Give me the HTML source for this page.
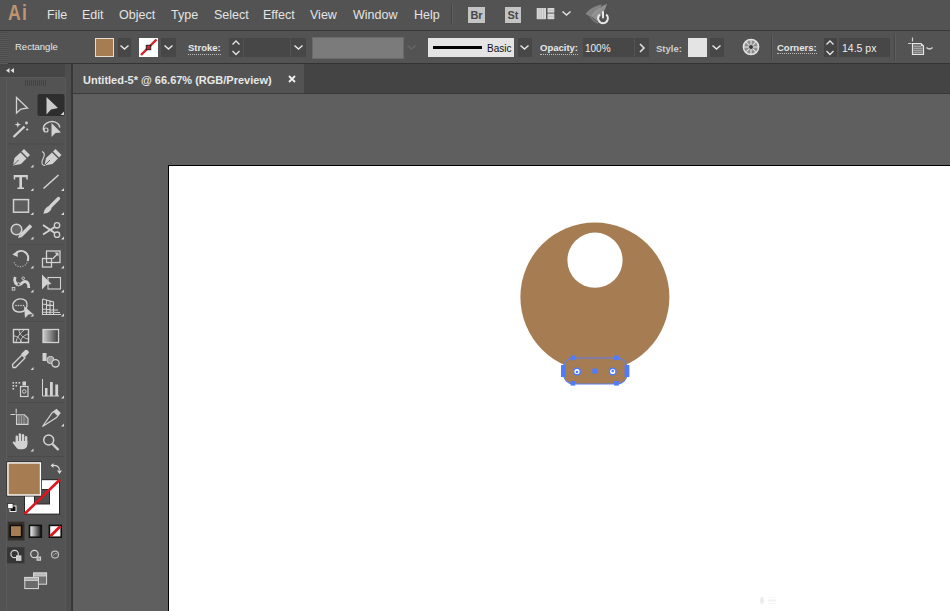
<!DOCTYPE html>
<html><head><meta charset="utf-8">
<style>
*{margin:0;padding:0;box-sizing:border-box}
html,body{width:950px;height:611px;overflow:hidden;background:#535353;font-family:"Liberation Sans",sans-serif;color:#e6e6e6;position:relative}
.a{position:absolute}
svg{position:absolute;overflow:visible}
#menubar{left:0;top:0;width:950px;height:30px;background:#535353}
.mi{position:absolute;top:8px;font-size:12.5px;line-height:14px;color:#e4e4e4;white-space:nowrap}
#ctrl{left:0;top:30px;width:950px;height:34px;background:#535353;border-top:1px solid #393939;border-bottom:1px solid #333}
.lbl{position:absolute;font-size:9.5px;line-height:11px;color:#e8e8e8;white-space:nowrap;font-weight:bold}
.ul{border-bottom:1px dotted #bdbdbd;padding-bottom:0.5px}
.dk{position:absolute;background:#474747}
#tools{left:0;top:64px;width:72px;height:547px;background:#535353}
#tabrow{left:73px;top:64px;width:877px;height:30px;background:#444444;border-bottom:1px solid #393939}
#tab{left:73px;top:64px;width:231px;height:29px;background:#535353}
#canvas{left:73px;top:94px;width:877px;height:517px;background:#5f5f5f}
#artboard{left:168px;top:165px;width:782px;height:446px;background:#ffffff;border-top:1px solid #000;border-left:1px solid #000}
</style></head><body>
<div id="menubar" class="a">
  <div class="a" style="left:8px;top:1px;font-size:22px;line-height:24px;font-weight:bold;color:#bf9470;letter-spacing:1.5px;transform:scaleX(0.8);transform-origin:0 0">Ai</div>
  <div class="mi" style="left:47px">File</div>
  <div class="mi" style="left:82px">Edit</div>
  <div class="mi" style="left:119px">Object</div>
  <div class="mi" style="left:171px">Type</div>
  <div class="mi" style="left:214px">Select</div>
  <div class="mi" style="left:263px">Effect</div>
  <div class="mi" style="left:310px">View</div>
  <div class="mi" style="left:353px">Window</div>
  <div class="mi" style="left:414px">Help</div>
  <div class="a" style="left:451px;top:4px;width:1px;height:20px;background:#454545"></div>
  <div class="a" style="left:452px;top:4px;width:1px;height:20px;background:#5f5f5f"></div>
  <div class="a" style="left:468px;top:7px;width:17px;height:16px;background:#c4c4c4;color:#474747;font-size:11px;font-weight:bold;line-height:16px;text-align:center">Br</div>
  <div class="a" style="left:505px;top:7px;width:16px;height:16px;background:#c4c4c4;color:#474747;font-size:11px;font-weight:bold;line-height:16px;text-align:center">St</div>
  <svg style="left:536px;top:8px" width="19" height="12">
    <rect x="0.7" y="0" width="9.3" height="11.2" fill="#d6d6d6"/>
    <path d="M3 0 V11.2 M5.3 0 V11.2 M7.6 0 V11.2" stroke="#b4b4b4" stroke-width="0.6"/>
    <rect x="11.5" y="0" width="6.8" height="4.6" fill="#d6d6d6"/><rect x="11.5" y="5.6" width="6.8" height="5.6" fill="#d6d6d6"/>
    <path d="M11.5 2.3 H18.3 M11.5 8.4 H18.3" stroke="#b4b4b4" stroke-width="0.6"/>
  </svg>
  <svg style="left:562px;top:11px" width="9" height="5"><path d="M0.5 0.5 L4.5 4 L8.5 0.5" stroke="#e0e0e0" stroke-width="1.6" fill="none"/></svg>
  <svg style="left:580px;top:0px" width="32" height="30">
    <path d="M5.5 14 C9 9 15 5.5 22 4.5 C20 9 16 13.5 11 17 Z" fill="#8c8c8c" opacity="0.85"/>
    <path d="M11 16 C15 10.5 21 6.5 27 3.8 C25.5 9.5 22 15 17 21 Z" fill="#9a9a9a" opacity="0.85"/>
    <path d="M10 16 C12 19 15 22 18 23" stroke="#7a7a7a" stroke-width="2" fill="none" opacity="0.8"/>
    <path d="M19.8 14.6 A4.9 4.9 0 1 0 26.2 14.6" stroke="#e8e8e8" stroke-width="2" fill="none"/>
    <line x1="23" y1="11.3" x2="23" y2="18.2" stroke="#e8e8e8" stroke-width="2"/>
  </svg>
</div>
<div id="ctrl" class="a">
  <div class="a" style="left:0;top:1px;width:8px;height:32px;background:repeating-linear-gradient(#4a4a4a 0 1px,#5a5a5a 1px 2px)"></div>
  <div class="lbl" style="left:15px;top:10px;font-weight:normal;font-size:9.5px">Rectangle</div>
  <!-- fill -->
  <div class="a" style="left:95px;top:7px;width:19px;height:19px;background:#a67c52;border:1px solid #e8dccf"></div>
  <div class="dk" style="left:118px;top:7px;width:13px;height:19px"></div>
  <svg style="left:120px;top:14px" width="9" height="5"><path d="M0.5 0.5 L4.5 4 L8.5 0.5" stroke="#e6e6e6" stroke-width="1.5" fill="none"/></svg>
  <!-- stroke -->
  <div class="a" style="left:139px;top:7px;width:19px;height:19px;background:#fff;overflow:hidden">
    <svg style="left:0;top:0" width="19" height="19"><line x1="2" y1="17" x2="17.5" y2="1.5" stroke="#d8202a" stroke-width="2.4"/><rect x="7.3" y="7.3" width="4.4" height="4.4" fill="#d8202a" stroke="#222" stroke-width="1"/></svg>
  </div>
  <div class="dk" style="left:161px;top:7px;width:15px;height:19px"></div>
  <svg style="left:164px;top:14px" width="9" height="5"><path d="M0.5 0.5 L4.5 4 L8.5 0.5" stroke="#e6e6e6" stroke-width="1.5" fill="none"/></svg>
  <div class="lbl ul" style="left:188px;top:11px">Stroke:</div>
  <div class="dk" style="left:229px;top:7px;width:14px;height:19px"></div>
  <svg style="left:231px;top:9px" width="10" height="16"><path d="M1.5 4.5 L5 1 L8.5 4.5 M1.5 11 L5 14.5 L8.5 11" stroke="#e0e0e0" stroke-width="1.4" fill="none"/></svg>
  <div class="dk" style="left:244px;top:7px;width:46px;height:19px"></div>
  <div class="dk" style="left:291px;top:7px;width:15px;height:19px"></div>
  <svg style="left:294px;top:14px" width="9" height="5"><path d="M0.5 0.5 L4.5 4 L8.5 0.5" stroke="#e6e6e6" stroke-width="1.5" fill="none"/></svg>
  <!-- variable width -->
  <div class="a" style="left:312px;top:6px;width:92px;height:22px;background:#7b7b7b;border:1px solid #6a6a6a"></div>
  <svg style="left:407px;top:14px" width="9" height="5"><path d="M0.5 0.5 L4.5 4 L8.5 0.5" stroke="#686868" stroke-width="1.3" fill="none"/></svg>
  <!-- basic -->
  <div class="a" style="left:428px;top:7px;width:86px;height:19px;background:#e4e4e4"></div>
  <div class="a" style="left:433px;top:15px;width:49px;height:3px;background:#000"></div>
  <div class="a" style="left:487px;top:12px;font-size:10px;line-height:11px;color:#111">Basic</div>
  <div class="dk" style="left:518px;top:7px;width:14px;height:19px"></div>
  <svg style="left:520px;top:14px" width="9" height="5"><path d="M0.5 0.5 L4.5 4 L8.5 0.5" stroke="#e6e6e6" stroke-width="1.5" fill="none"/></svg>
  <!-- opacity -->
  <div class="lbl ul" style="left:540px;top:11px">Opacity:</div>
  <div class="dk" style="left:583px;top:7px;width:51px;height:19px"></div>
  <div class="a" style="left:585px;top:12px;font-size:10px;line-height:11px;color:#eee">100%</div>
  <div class="dk" style="left:635px;top:7px;width:14px;height:19px"></div>
  <svg style="left:639px;top:12px" width="6" height="10"><path d="M1 1 L5 5 L1 9" stroke="#e6e6e6" stroke-width="1.5" fill="none"/></svg>
  <!-- style -->
  <div class="lbl" style="left:656px;top:12px;color:#cfcfcf">Style:</div>
  <div class="a" style="left:688px;top:7px;width:19px;height:19px;background:#e4e4e4"></div>
  <div class="dk" style="left:710px;top:7px;width:14px;height:19px"></div>
  <svg style="left:712px;top:14px" width="9" height="5"><path d="M0.5 0.5 L4.5 4 L8.5 0.5" stroke="#e6e6e6" stroke-width="1.5" fill="none"/></svg>
  <!-- globe -->
  <svg style="left:742px;top:7px" width="18" height="18">
    <circle cx="9" cy="9" r="7.6" fill="#8e8e8e" stroke="#e4e4e4" stroke-width="1.5"/>
    <g stroke="#dcdcdc" stroke-width="1.2"><line x1="9" y1="1.5" x2="9" y2="16.5"/><line x1="1.5" y1="9" x2="16.5" y2="9"/><line x1="3.7" y1="3.7" x2="14.3" y2="14.3"/><line x1="14.3" y1="3.7" x2="3.7" y2="14.3"/></g>
    <circle cx="9" cy="9" r="2" fill="#3a3a3a"/>
  </svg>
  <div class="a" style="left:771px;top:3px;width:1px;height:27px;background:#464646"></div>
  <div class="a" style="left:772px;top:3px;width:1px;height:27px;background:#5e5e5e"></div>
  <!-- corners -->
  <div class="lbl ul" style="left:777px;top:10.5px">Corners:</div>
  <div class="dk" style="left:824px;top:7px;width:13px;height:19px;background:#444"></div>
  <svg style="left:825px;top:9px" width="10" height="16"><path d="M1.5 4.5 L5 1 L8.5 4.5 M1.5 11 L5 14.5 L8.5 11" stroke="#e0e0e0" stroke-width="1.4" fill="none"/></svg>
  <div class="dk" style="left:839px;top:7px;width:51px;height:19px"></div>
  <div class="a" style="left:842px;top:11px;font-size:10.5px;line-height:12px;color:#eee">14.5 px</div>
  <div class="a" style="left:894px;top:3px;width:1px;height:27px;background:#464646"></div>
  <div class="a" style="left:895px;top:3px;width:1px;height:27px;background:#5e5e5e"></div>
  <!-- doc icon -->
  <svg style="left:900px;top:0px" width="40" height="30">
    <path d="M12.5 6.5 V10.5 M8 12.5 H11.5" stroke="#d0d0d0" stroke-width="1.2" fill="none"/>
    <path d="M12.5 12.5 H21 L23.5 15 V23.5 H12.5 Z" fill="#7a7a7a" stroke="#e6e6e6" stroke-width="1.2"/>
    <path d="M14 15.5 H21 M14 17.5 H22 M14 19.5 H22 M14 21.5 H22" stroke="#b0b0b0" stroke-width="0.7"/>
    <path d="M21 12.5 L21 15 L23.5 15" fill="#dddddd"/>
    <path d="M26.5 16.5 Q29.5 19.5 32.5 16.5" stroke="#d6d6d6" stroke-width="1.4" fill="none"/>
  </svg>
</div>
<div id="tools" class="a"></div>
<svg style="left:0;top:0" width="73" height="611" viewBox="0 0 73 611">
<defs>
<linearGradient id="gt" x1="0" x2="1" y1="0" y2="0"><stop offset="0" stop-color="#3a3a3a"/><stop offset="1" stop-color="#cfcfcf"/></linearGradient>
<linearGradient id="gm" x1="0" x2="1" y1="0" y2="0"><stop offset="0" stop-color="#ffffff"/><stop offset="1" stop-color="#111111"/></linearGradient>
</defs>
<!-- header -->
<rect x="0" y="64" width="72" height="13" fill="#464646"/>
<rect x="0" y="77" width="72" height="1" fill="#5a5a5a"/>
<path d="M9.5 68 L6 70.5 L9.5 73 Z M14 68 L10.5 70.5 L14 73 Z" fill="#e0e0e0"/>
<!-- panel borders -->
<rect x="6" y="78" width="1" height="533" fill="#5a5a5a"/>
<rect x="65" y="64" width="7" height="547" fill="#4e4e4e"/>
<rect x="65" y="78" width="1" height="533" fill="#585858"/>
<rect x="71" y="64" width="2" height="547" fill="#383838"/>
<!-- gripper -->
<g fill="#434343"><rect x="25" y="80" width="1" height="6"/><rect x="27" y="80" width="1" height="6"/><rect x="29" y="80" width="1" height="6"/><rect x="31" y="80" width="1" height="6"/><rect x="33" y="80" width="1" height="6"/><rect x="35" y="80" width="1" height="6"/><rect x="37" y="80" width="1" height="6"/><rect x="39" y="80" width="1" height="6"/><rect x="41" y="80" width="1" height="6"/><rect x="43" y="80" width="1" height="6"/><rect x="45" y="80" width="1" height="6"/></g>
<g fill="#d2d2d2" stroke="#d2d2d2">
<!-- row1 -->
<rect x="37.5" y="94" width="27" height="22" rx="2" fill="#2e2e2e" stroke="none"/>
<path d="M16.5 97.5 L27.5 108 L21 109 L16.5 113 Z" fill="none" stroke-width="1.3"/>
<path d="M46.5 97 L58 108 L51 109.5 L46.5 114.5 Z" fill="#cacaca" stroke="none"/>
<path d="M64 111.5 V115 H60.5 Z" stroke="none"/>
<!-- row2 -->
<line x1="13.5" y1="137" x2="24.5" y2="126.5" stroke-width="2.4"/>
<path d="M17.8 121.5 L18.6 123.8 L21 124.6 L18.6 125.4 L17.8 127.8 L17 125.4 L14.6 124.6 L17 123.8 Z" stroke="none"/>
<circle cx="26.5" cy="123" r="1.4" stroke="none"/><circle cx="27.2" cy="129.5" r="1.1" stroke="none"/>
<path d="M44 131 C41 124 51 119 57 123 C59 124.5 60 126 59.5 127.5" fill="none" stroke-width="1.4"/>
<circle cx="46" cy="130" r="2" fill="none" stroke-width="1.2"/>
<path d="M51.5 123 L61 132.5 L55.5 133 L51.5 137 Z" stroke="none"/>
<!-- row3 pen -->
<path d="M13 165.5 L14.5 158 L20.5 152.5 L26.5 158.5 L21 164 Z" stroke="none"/>
<path d="M21.5 151.5 L24 149 L30 155 L27.5 157.5 Z" stroke="none"/>
<line x1="13.5" y1="165" x2="18.5" y2="160" stroke="#535353" stroke-width="0.9"/>
<path d="M44.5 165.5 L46 158 L52 152.5 L58 158.5 L52.5 164 Z" stroke="none"/>
<path d="M53 151.5 L55.5 149 L61.5 155 L59 157.5 Z" stroke="none"/>
<line x1="45" y1="165" x2="50" y2="160" stroke="#535353" stroke-width="0.9"/>
<path d="M42 151.5 C46 153 44 157 42.5 160 C41 163 42.5 166 45 165.5" fill="none" stroke-width="1.1"/>
<!-- row4 -->
<path d="M13.7 175 H27.8 V179.5 H26.3 V177.2 H22 V187.4 H24 V189 H17.4 V187.4 H19.4 V177.2 H15.2 V179.5 H13.7 Z" stroke="none"/>
<line x1="43.5" y1="188.5" x2="58.5" y2="175" stroke-width="1.6"/>
<!-- row5 -->
<rect x="13.5" y="199.6" width="15" height="12.6" fill="#5e5e5e" stroke-width="1.5"/>
<line x1="58.5" y1="198.5" x2="50.5" y2="206.5" stroke-width="3.2" stroke-linecap="round"/>
<path d="M43.5 213.8 C44 210 46 206.5 49.5 206 L51.5 208 C51 211.5 47.5 213.5 43.5 213.8 Z" stroke="none"/>
<!-- row6 -->
<circle cx="16.5" cy="229.5" r="5.3" fill="#666" stroke-width="1.5"/>
<line x1="31" y1="225.5" x2="21" y2="235.5" stroke-width="3.6"/>
<path d="M19.5 234 L22.5 237 L18 238 Z" stroke="none"/>
<circle cx="57" cy="225.3" r="2.7" fill="none" stroke-width="1.3"/>
<circle cx="57" cy="234.7" r="2.7" fill="none" stroke-width="1.3"/>
<path d="M43 225 L54.8 233 M43 234.5 L54.8 227" fill="none" stroke-width="2"/>
<!-- row7 -->
<path d="M16.5 252.8 A7 7 0 0 1 27.5 261" fill="none" stroke-width="2.1"/>
<path d="M27 262.5 A7 7 0 0 1 14 262" fill="none" stroke-width="1.2" stroke-dasharray="1.2 1.3" opacity="0.75"/>
<path d="M12.3 254.5 L17.5 251 L17.8 257 Z" stroke="none"/>
<rect x="46.5" y="251" width="13.5" height="11.5" fill="none" stroke-width="1.3"/>
<rect x="42.5" y="258.5" width="9" height="8.5" fill="none" stroke-width="1.3"/>
<line x1="52.5" y1="259" x2="57.5" y2="254" stroke-width="1.3"/>
<path d="M58.5 252.5 L58.5 256.5 L54.5 252.5 Z" stroke="none"/>
<!-- row8 -->
<path d="M15.2 277 C13.8 280.5 15.5 284.5 18.5 284.8 C21.5 285 22 281.5 24.8 281.5 C27.3 281.5 28.8 284 28.8 288" fill="none" stroke-width="2.8"/>
<circle cx="18.6" cy="284.2" r="1.5" fill="#535353" stroke-width="0.9"/>
<circle cx="23.2" cy="278.3" r="1.3" fill="#535353" stroke-width="0.9"/>
<rect x="12.2" y="287.5" width="2.6" height="2.6" fill="none" stroke-width="0.9"/>
<path d="M42 274.5 L51.5 284 L46.5 284.8 L42 289.5 Z" stroke="none"/>
<rect x="48" y="277.5" width="12.5" height="11.5" fill="none" stroke-width="1.1"/>
<!-- row9 -->
<path d="M14 302 C17 298 23 298 26 301 C28 304 27 309 24 311 C20 313 14 312 13 308 C12.5 305 13 303 14 302 Z" fill="none" stroke-width="1.4"/>
<g stroke="none"><circle cx="16" cy="305.5" r="0.8"/><circle cx="18.5" cy="305.5" r="0.8"/><circle cx="21" cy="305.5" r="0.8"/><circle cx="23.5" cy="305.5" r="0.8"/></g>
<path d="M24 306 L33 314 L28.5 314.5 L25 318 Z" stroke="none"/>
<path d="M42.5 299 V314.5 H61 M42.5 299 L53.5 302 V314.5 M46.5 300 V314.5 M50 301 V314.5 M42.5 304 L53.5 305.5 M42.5 309 L58 310 M42.5 312 L60 312.5" fill="none" stroke-width="1.1"/>
<!-- row10 -->
<rect x="13.5" y="329.5" width="15" height="13" fill="#4a4a4a" stroke-width="1.4"/>
<path d="M16 342 C17 337 20 333 24 330 M21 342 C21 338 23 336 28 334 M14 336 C17 336 20 338 21 342 M19 330 C19 334 23 338 28 339" fill="none" stroke-width="0.9"/>
<rect x="43" y="329.5" width="15.5" height="13" fill="url(#gt)" stroke-width="1.3" transform="rotate(180 50.75 336)"/>
<!-- row11 -->
<path d="M13 367.5 L12.5 364.5 L22 355 L25 358 L15.5 367.5 Z" fill="none" stroke-width="1.3"/>
<path d="M21 354 L25.5 349.8 Q28.5 350 29 352.8 L25 357 Z" stroke="none"/>
<rect x="42.5" y="353" width="4" height="8" stroke="none"/>
<circle cx="50.5" cy="360" r="3.6" fill="#9a9a9a" stroke-width="1"/>
<circle cx="55.5" cy="363.3" r="3.7" fill="#535353" stroke-width="1.3"/>
<!-- row12 -->
<g stroke="none"><rect x="12.5" y="382" width="1.6" height="1.6"/><rect x="15.5" y="382" width="1.6" height="1.6"/><rect x="18.5" y="382" width="1.6" height="1.6"/><rect x="12.5" y="385" width="1.6" height="1.6"/><rect x="15.5" y="385" width="1.6" height="1.6"/><rect x="12.5" y="388" width="1.6" height="1.6"/></g>
<rect x="20.5" y="386.5" width="7.5" height="10" fill="none" stroke-width="1.2"/>
<rect x="22.5" y="381.5" width="3.5" height="4" stroke="none"/>
<circle cx="24.2" cy="391.5" r="1.8" fill="none" stroke-width="1"/>
<path d="M42.5 379 V396 H59" fill="none" stroke-width="1"/>
<rect x="45" y="388" width="2.5" height="8" stroke="none"/><rect x="50" y="382" width="2.8" height="14" stroke="none"/><rect x="55.3" y="384.5" width="2.8" height="11.5" stroke="none"/>
<!-- row13 -->
<path d="M10.5 414.5 H15.5 M16.2 408.7 V413.6" fill="none" stroke-width="1.1"/>
<path d="M16.5 414.8 H24.5 L28 418.3 V424.4 H16.5 Z" fill="#6e6e6e" stroke-width="1.1"/>
<path d="M19 415.5 V424 M21.5 415.5 V424 M24 416 V424" stroke="#a8a8a8" stroke-width="0.8"/>
<path d="M42.5 426.5 L52 413 L56.5 409.5 L60 413 L56.5 417.5 Z" fill="none" stroke-width="1.2"/>
<path d="M56.5 409.5 L60 413 L57.5 416 L53.5 412 Z" stroke="none"/>
<!-- row14 -->
<g stroke="none">
<rect x="15.6" y="435.5" width="2.4" height="9" rx="1.2"/>
<rect x="18.7" y="433.3" width="2.4" height="10" rx="1.2"/>
<rect x="21.8" y="434" width="2.4" height="10" rx="1.2"/>
<rect x="24.9" y="436" width="2.4" height="9" rx="1.2"/>
<path d="M15.6 441 H27.3 V445 C27 447.5 25.5 449 23 449.2 H19 C17.5 449 16.5 448 15.5 446.5 L12.8 443 C12.3 442 13.2 441 14.3 441.6 L16 443 Z"/>
</g>
<circle cx="48.7" cy="440" r="5" fill="none" stroke-width="1.5"/>
<line x1="52.5" y1="444" x2="58.5" y2="450" stroke-width="2.4"/>
</g>
<!-- flyout triangles -->
<g fill="#d8d8d8">
<path d="M33.5 164.5 V167.5 H30.5 Z"/>
<path d="M33.5 188 V191 H30.5 Z"/><path d="M64 188 V191 H61 Z"/>
<path d="M33.5 212 V215 H30.5 Z"/><path d="M64 212 V215 H61 Z"/>
<path d="M33.5 236.5 V239.5 H30.5 Z"/><path d="M64 236.5 V239.5 H61 Z"/>
<path d="M33.5 265.5 V268.5 H30.5 Z"/><path d="M64 265.5 V268.5 H61 Z"/>
<path d="M33.5 289.5 V292.5 H30.5 Z"/><path d="M64 289.5 V292.5 H61 Z"/>
<path d="M33.5 313.5 V316.5 H30.5 Z"/><path d="M64 313.5 V316.5 H61 Z"/>
<path d="M33.5 367 V370 H30.5 Z"/>
<path d="M33.5 395.5 V398.5 H30.5 Z"/><path d="M64 395.5 V398.5 H61 Z"/>
<path d="M64 423.5 V426.5 H61 Z"/>
<path d="M33.5 448.5 V451.5 H30.5 Z"/>
</g>
<!-- separators -->
<g fill="#4b4b4b"><rect x="8" y="143.5" width="56" height="1"/><rect x="8" y="244" width="56" height="1"/><rect x="8" y="321" width="56" height="1"/><rect x="8" y="402" width="56" height="1"/><rect x="8" y="456" width="56" height="1"/></g>
<!-- fill / stroke -->
<rect x="24" y="479.2" width="36" height="35.4" fill="#2a2a2a"/>
<rect x="25" y="480.2" width="34" height="33.4" fill="#ffffff"/>
<rect x="34" y="489" width="16" height="15.5" fill="#2a2a2a"/>
<rect x="35" y="490" width="14" height="13.5" fill="#4e4e4e"/>
<line x1="24.5" y1="514" x2="60" y2="479.5" stroke="#e0141e" stroke-width="2.6"/>
<rect x="6.4" y="461.4" width="35.6" height="35.1" fill="#2a2a2a"/>
<rect x="7.2" y="462.2" width="34" height="33.5" fill="#ffffff"/>
<rect x="8.6" y="463.6" width="31.2" height="30.7" fill="#a67c52"/>
<path d="M52 465.5 C56 465 59 466.5 59.5 470" fill="none" stroke="#d8d8d8" stroke-width="1.2"/>
<path d="M50.5 465.5 L53.5 463 L53.5 468 Z M59.5 474 L57 470.5 L62 470.5 Z" fill="#d8d8d8"/>
<rect x="10" y="506" width="6" height="5.5" fill="#111" stroke="#fff" stroke-width="0.9"/>
<rect x="7.8" y="503.6" width="5.2" height="5" fill="#fff" stroke="#111" stroke-width="0.6"/>
<!-- color mode -->
<rect x="7.7" y="521.7" width="16.8" height="18.7" fill="#352f29"/>
<rect x="10.2" y="525.4" width="11.4" height="11.4" fill="#a67c52" stroke="#111" stroke-width="1.6"/>
<rect x="29.5" y="525.4" width="11.8" height="11.8" fill="url(#gm)" stroke="#111" stroke-width="1.6"/>
<rect x="49.4" y="525.4" width="11.8" height="11.8" fill="#fff" stroke="#111" stroke-width="1.6"/>
<line x1="50.3" y1="536.3" x2="60.3" y2="526.3" stroke="#e0141e" stroke-width="2.8"/>
<!-- draw modes -->
<rect x="7.1" y="547.2" width="17.4" height="16.1" fill="#363636"/>
<g fill="none" stroke="#d6d6d6" stroke-width="1.2">
<circle cx="14.6" cy="554" r="3.7"/><rect x="16.6" y="556" width="4.2" height="4.2" fill="#c8c8c8"/>
<circle cx="34.4" cy="554" r="3.7"/><rect x="37" y="557" width="3.6" height="3.2" fill="#9a9a9a" stroke-width="1"/>
<circle cx="55" cy="554.6" r="3.5" stroke="#bdbdbd"/><path d="M53.5 555.5 Q55 552 57 554" stroke="#aaa" stroke-width="1"/>
</g>
<!-- screen mode -->
<rect x="33.6" y="573" width="13" height="11.2" fill="#727272" stroke="#dadada" stroke-width="1"/>
<rect x="33.6" y="573" width="13" height="3" fill="#b8b8b8" stroke="#dadada" stroke-width="0.8"/>
<rect x="24.8" y="577.4" width="13.6" height="11.2" fill="#6a6a6a" stroke="#dadada" stroke-width="1"/>
<rect x="24.8" y="577.4" width="13.6" height="3" fill="#b0b0b0" stroke="#dadada" stroke-width="0.8"/>
</svg>
<div id="tabrow" class="a"></div>
<div id="tab" class="a">
  <div class="a" style="left:10px;top:10px;font-size:11px;line-height:12px;font-weight:bold;color:#e8e8e8;white-space:nowrap">Untitled-5* @ 66.67% (RGB/Preview)</div>
  <svg style="left:215px;top:11px" width="8" height="8"><path d="M1 1 L7 7 M7 1 L1 7" stroke="#f0f0f0" stroke-width="1.8"/></svg>
</div>
<div id="canvas" class="a"></div>
<div id="artboard" class="a"></div>
<svg style="left:0;top:0" width="950" height="611" viewBox="0 0 950 611">
<circle cx="594.9" cy="297" r="74.5" fill="#a67c52"/>
<circle cx="595" cy="260.2" r="27.6" fill="#ffffff"/>
<rect x="563.5" y="358" width="63.5" height="26" rx="9.7" fill="#a67c52"/>
<rect x="563.5" y="358" width="63.5" height="26" rx="9.7" fill="none" stroke="#5b7ff0" stroke-width="1.1"/>
<g fill="#4f7bff">
<rect x="570.8" y="355.5" width="4.6" height="4.6"/><rect x="614.2" y="355.5" width="4.6" height="4.6"/>
<rect x="570.6" y="381" width="4.6" height="4.6"/><rect x="614.2" y="381" width="4.6" height="4.6"/>
<rect x="561" y="365" width="4.8" height="12"/>
<rect x="624.6" y="365" width="4.8" height="12"/>
<rect x="592.3" y="368.6" width="4.8" height="5"/>
</g>
<ellipse cx="762" cy="600.5" rx="2" ry="3.5" fill="#ececec"/>
<rect x="768" y="597" width="8" height="1" fill="#f6f6f6"/><rect x="768" y="599.5" width="8" height="2" fill="#f2f2f2"/><rect x="768" y="603" width="8" height="1" fill="#f6f6f6"/>
<circle cx="577" cy="371.5" r="3.3" fill="#fff" stroke="#4f7bff" stroke-width="1.4"/><circle cx="577" cy="372" r="1.3" fill="#4f7bff"/>
<circle cx="612.7" cy="371.5" r="3.3" fill="#fff" stroke="#4f7bff" stroke-width="1.4"/><circle cx="612.7" cy="371" r="1.3" fill="#4f7bff"/>
</svg>
</body></html>
